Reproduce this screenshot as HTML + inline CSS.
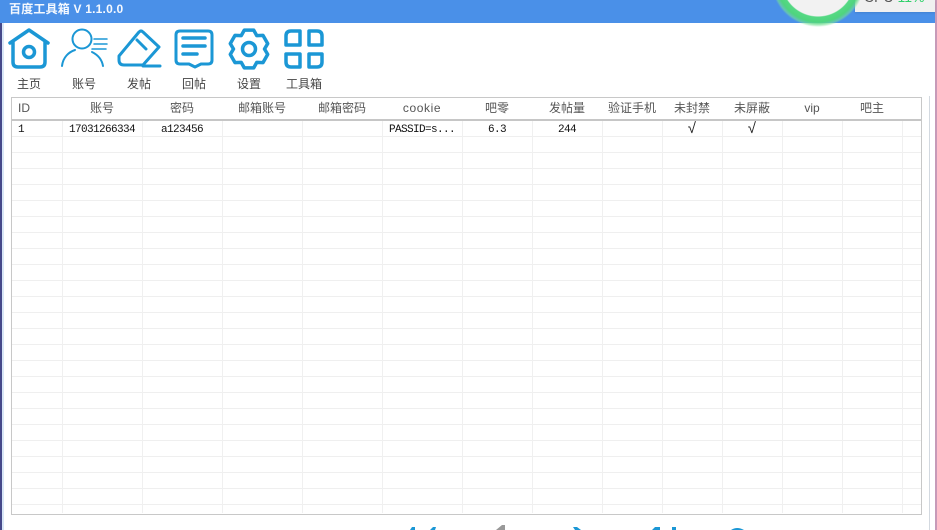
<!DOCTYPE html>
<html><head><meta charset="utf-8">
<style>
html,body{margin:0;padding:0}
body{width:937px;height:530px;position:relative;overflow:hidden;background:#fff;font-family:"Liberation Sans","Noto Sans CJK SC",sans-serif}
.a{position:absolute}
.tb{top:76px;font-size:12px;line-height:16px;color:#444;width:60px;text-align:center}
.h{top:100px;font-size:12px;line-height:16px;color:#555;text-align:center}
.d{top:123px;font-family:"Liberation Mono","Noto Sans CJK SC",monospace;font-size:11px;letter-spacing:-.6px;line-height:14px;color:#111;text-align:center;white-space:pre}
.k{top:123px;font-size:15px;letter-spacing:0;color:#222}
.c{width:1px;background:#f0f0f0}
</style></head><body>
<div class="a" style="left:0;top:0;width:937px;height:23px;background:#4a90e8"></div>
<div class="a" style="left:9px;top:2px;font-size:12px;letter-spacing:.2px;line-height:15px;font-weight:bold;color:#f4f8fe;white-space:pre">百度工具箱 V 1.1.0.0</div>
<div class="a" style="left:0;top:23px;width:2px;height:507px;background:#46498a"></div>
<div class="a" style="left:2px;top:23px;width:2px;height:507px;background:#d8e6f7"></div>
<div class="a" style="left:935px;top:0;width:2px;height:530px;background:#c79ab8"></div>
<div class="a" style="left:929px;top:96px;width:1px;height:434px;background:#d3d9e0"></div>

<div class="a" style="left:855px;top:0;width:80px;height:12px;background:#f0f0f0;box-shadow:0 1px 2px rgba(0,0,0,.1)"></div>
<div class="a" style="left:864px;top:-11px;font-size:14px;line-height:16px;color:#555;white-space:pre">CPU <span style="color:#2fd06a">11%</span></div>
<div class="a" style="left:771px;top:-67px;width:94px;height:94px;border-radius:50%;background:radial-gradient(circle,#f2f2f2 0,#f2f2f2 36px,#55d984 37px,#4fd47e 42px,rgba(120,225,150,.6) 45px,rgba(120,225,150,0) 47px)"></div>

<svg class="a" style="left:0;top:0" width="340" height="76" fill="none" stroke="#1b97d5" stroke-width="3.5" stroke-linecap="round" stroke-linejoin="round">
<path d="M10 43 L29 30 L48 43 M13 41 V62 Q13 67 18 67 H40 Q45 67 45 62 V41"/>
<circle cx="29" cy="52" r="5.5"/>
<g stroke-width="2">
<circle cx="82" cy="39" r="9.5"/>
<path d="M62 66 C63 57 69 52 75 50 M92 52 C98 55 102 60 103 66"/>
<path d="M94 39 H107 M94 44 H107 M92 49 H106" stroke-width="1.5"/>
</g>
<path d="M139 32 Q141 30 143 32 L159 47 L143 65 H124 Q119 65 119 60 V56 Z" stroke-width="3"/>
<path d="M137 40 L146 49 M143 66 H160" stroke-width="3"/>
<path d="M180 31 H208 Q212 31 212 35 V60 Q212 64 208 64 H201 L195 67 L189 64 H180 Q176 64 176 60 V35 Q176 31 180 31 Z" stroke-width="3"/>
<path d="M183 38 H205 M183 46 H205 M183 54 H197"/>
<path d="M244.3 30.1 L253.7 30.1 L256.75 35.6 L263 35.4 L267.7 43.6 L264.5 49 L267.7 54.4 L263 62.6 L256.75 62.4 L253.7 67.9 L244.3 67.9 L241.25 62.4 L235 62.6 L230.3 54.4 L233.5 49 L230.3 43.6 L235 35.4 L241.25 35.6 Z"/>
<circle cx="249" cy="49" r="6.5"/>
<g stroke-width="3.5">
<path d="M291 31 H300 V45 H286 V36 Q286 31 291 31 Z"/>
<path d="M309 31 H317 Q322 31 322 36 V45 H309 Z"/>
<path d="M286 54 H300 V67 H291 Q286 67 286 62 Z"/>
<path d="M309 54 H322 V62 Q322 67 317 67 H309 Z"/>
</g>
</svg>

<div class="a tb" style="left:-1px">主页</div>
<div class="a tb" style="left:54px">账号</div>
<div class="a tb" style="left:109px">发帖</div>
<div class="a tb" style="left:164px">回帖</div>
<div class="a tb" style="left:219px">设置</div>
<div class="a tb" style="left:274px">工具箱</div>

<div class="a" style="left:11px;top:97px;width:909px;height:416px;border:1px solid #c8c8c8;background:repeating-linear-gradient(to bottom,transparent 0,transparent 15px,#efefef 15px,#efefef 16px);background-position:0 39px"></div>
<div class="a" style="left:12px;top:98px;width:909px;height:21px;background:#fff"></div>
<div class="a" style="left:12px;top:119px;width:909px;height:2px;background:#c6c6c6"></div>
<div class="a c" style="left:62px;top:121px;height:392px"></div>
<div class="a c" style="left:142px;top:121px;height:392px"></div>
<div class="a c" style="left:222px;top:121px;height:392px"></div>
<div class="a c" style="left:302px;top:121px;height:392px"></div>
<div class="a c" style="left:382px;top:121px;height:392px"></div>
<div class="a c" style="left:462px;top:121px;height:392px"></div>
<div class="a c" style="left:532px;top:121px;height:392px"></div>
<div class="a c" style="left:602px;top:121px;height:392px"></div>
<div class="a c" style="left:662px;top:121px;height:392px"></div>
<div class="a c" style="left:722px;top:121px;height:392px"></div>
<div class="a c" style="left:782px;top:121px;height:392px"></div>
<div class="a c" style="left:842px;top:121px;height:392px"></div>
<div class="a c" style="left:902px;top:121px;height:392px"></div>

<div class="a h" style="left:18px">ID</div>
<div class="a h" style="left:62px;width:80px">账号</div>
<div class="a h" style="left:142px;width:80px">密码</div>
<div class="a h" style="left:222px;width:80px">邮箱账号</div>
<div class="a h" style="left:302px;width:80px">邮箱密码</div>
<div class="a h" style="left:382px;width:80px;letter-spacing:.6px">cookie</div>
<div class="a h" style="left:462px;width:70px">吧零</div>
<div class="a h" style="left:532px;width:70px">发帖量</div>
<div class="a h" style="left:602px;width:60px">验证手机</div>
<div class="a h" style="left:662px;width:60px">未封禁</div>
<div class="a h" style="left:722px;width:60px">未屏蔽</div>
<div class="a h" style="left:782px;width:60px">vip</div>
<div class="a h" style="left:842px;width:60px">吧主</div>

<div class="a d" style="left:18px">1</div>
<div class="a d" style="left:62px;width:80px">17031266334</div>
<div class="a d" style="left:142px;width:80px">a123456</div>
<div class="a d" style="left:389px">PASSID=s...</div>
<div class="a d" style="left:462px;width:70px">6.3</div>
<div class="a d" style="left:532px;width:70px">244</div>
<div class="a d k" style="left:662px;width:60px">√</div>
<div class="a d k" style="left:722px;width:60px">√</div>

<svg class="a" style="left:380px;top:524px" width="380" height="6" fill="#1b97d5">
<path d="M30 6 L32 3 L35 3 L35 6 Z M50 6 L53 3 L56 3 L55 6 Z M193 3 L197 3 L201 6 H195 Z M272 6 L275 3 L280 3 L280 6 Z M292 3 L296 3 L296 6 H292 Z M351 6 Q357 2 364 6 Z"/>
<path d="M116 6 L122 1 L125 1 L125 6 Z" fill="#999"/>
</svg>
</body></html>
